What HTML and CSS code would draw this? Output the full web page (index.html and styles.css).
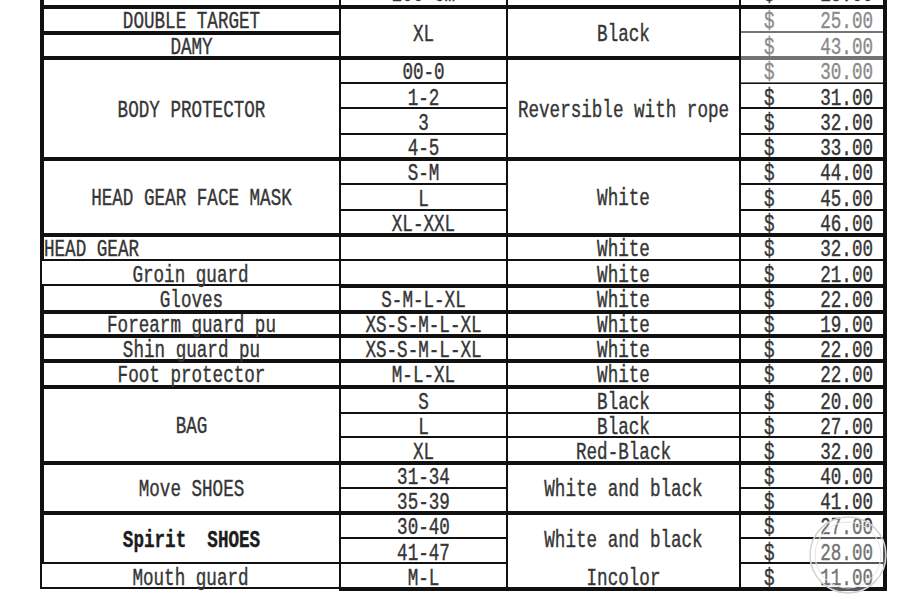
FILE: index.html
```html
<!DOCTYPE html>
<html>
<head>
<meta charset="utf-8">
<link rel="stylesheet" href="styles.css">
</head>
<body>
<div class="page">
  <div class="sheet">
    <!-- partial top row -->
    <div class="c n top"></div>
    <div class="c top"><span>200 cm</span></div>
    <div class="c top"></div>
    <div class="c p top"><span>$</span><span>18.00</span></div>

    <div class="c n tk"><span>DOUBLE TARGET</span></div>
    <div class="c tk r2"><span>XL</span></div>
    <div class="c tk r2"><span>Black</span></div>
    <div class="c p tk"><span>$</span><span>25.00</span></div>
    <div class="c n tk"><span>DAMY</span></div>
    <div class="c p"><span>$</span><span>43.00</span></div>

    <div class="c n tk r4"><span>BODY PROTECTOR</span></div>
    <div class="c tk"><span>00-0</span></div>
    <div class="c tk r4"><span>Reversible with rope</span></div>
    <div class="c p tk"><span>$</span><span>30.00</span></div>
    <div class="c"><span>1-2</span></div>
    <div class="c p"><span>$</span><span>31.00</span></div>
    <div class="c"><span>3</span></div>
    <div class="c p"><span>$</span><span>32.00</span></div>
    <div class="c"><span>4-5</span></div>
    <div class="c p"><span>$</span><span>33.00</span></div>

    <div class="c n tk r3"><span>HEAD GEAR FACE MASK</span></div>
    <div class="c tk"><span>S-M</span></div>
    <div class="c tk r3"><span>White</span></div>
    <div class="c p tk"><span>$</span><span>44.00</span></div>
    <div class="c"><span>L</span></div>
    <div class="c p"><span>$</span><span>45.00</span></div>
    <div class="c"><span>XL-XXL</span></div>
    <div class="c p"><span>$</span><span>46.00</span></div>

    <div class="c n tk left"><span>HEAD GEAR</span></div>
    <div class="c tk"></div>
    <div class="c tk"><span>White</span></div>
    <div class="c p tk"><span>$</span><span>32.00</span></div>

    <div class="c n thinl"><span>Groin guard</span></div>
    <div class="c"></div>
    <div class="c"><span>White</span></div>
    <div class="c p"><span>$</span><span>21.00</span></div>

    <div class="c n"><span>Gloves</span></div>
    <div class="c tk"><span>S-M-L-XL</span></div>
    <div class="c tk"><span>White</span></div>
    <div class="c p tk"><span>$</span><span>22.00</span></div>

    <div class="c n tk"><span>Forearm guard pu</span></div>
    <div class="c tk"><span>XS-S-M-L-XL</span></div>
    <div class="c tk"><span>White</span></div>
    <div class="c p tk"><span>$</span><span>19.00</span></div>

    <div class="c n tk"><span>Shin guard pu</span></div>
    <div class="c tk"><span>XS-S-M-L-XL</span></div>
    <div class="c tk"><span>White</span></div>
    <div class="c p tk"><span>$</span><span>22.00</span></div>

    <div class="c n tk"><span>Foot protector</span></div>
    <div class="c tk"><span>M-L-XL</span></div>
    <div class="c tk"><span>White</span></div>
    <div class="c p tk"><span>$</span><span>22.00</span></div>

    <div class="c n tk r3"><span>BAG</span></div>
    <div class="c tk"><span>S</span></div>
    <div class="c tk"><span>Black</span></div>
    <div class="c p tk"><span>$</span><span>20.00</span></div>
    <div class="c"><span>L</span></div>
    <div class="c"><span>Black</span></div>
    <div class="c p"><span>$</span><span>27.00</span></div>
    <div class="c"><span>XL</span></div>
    <div class="c"><span>Red-Black</span></div>
    <div class="c p"><span>$</span><span>32.00</span></div>

    <div class="c n tk r2"><span>Move SHOES</span></div>
    <div class="c tk"><span>31-34</span></div>
    <div class="c tk r2"><span>White and black</span></div>
    <div class="c p tk"><span>$</span><span>40.00</span></div>
    <div class="c"><span>35-39</span></div>
    <div class="c p"><span>$</span><span>41.00</span></div>

    <div class="c n tk r2 bold"><span>Spirit  SHOES</span></div>
    <div class="c tk"><span>30-40</span></div>
    <div class="c tk r2"><span>White and black</span></div>
    <div class="c p tk"><span>$</span><span>27.00</span></div>
    <div class="c"><span>41-47</span></div>
    <div class="c p"><span>$</span><span>28.00</span></div>

    <div class="c n thinl bb2"><span>Mouth guard</span></div>
    <div class="c bb"><span>M-L</span></div>
    <div class="c bb notop"><span>Incolor</span></div>
    <div class="c p bb"><span>$</span><span>11.00</span></div>
  </div>

  <div class="glare"></div>

  <svg class="mark" width="84" height="84" viewBox="0 0 84 84">
    <circle cx="42" cy="42" r="38" fill="rgba(255,255,255,0.3)" stroke="#d2d2d2" stroke-width="1.5"/>
    <circle cx="42" cy="42" r="33" fill="none" stroke="#e6e6e6" stroke-width="1"/>
  </svg>
</div>
</body>
</html>
```

FILE: styles.css
```css
html, body {
  margin: 0;
  padding: 0;
  background: #ffffff;
}

body {
  font-family: "Liberation Mono", "DejaVu Sans Mono", monospace;
  color: #363636;
}

.page {
  position: relative;
  width: 900px;
  height: 599px;
  overflow: hidden;
}

.sheet {
  margin-left: 40px;
  width: 843px;
  display: grid;
  grid-template-columns: 299px 167px 233px 144px;
  grid-template-rows: 5px 26px 25px 26px 25px 26px 24px 26px 26px 24px 26px 25px 26px 24px 25px 26px 27px 24px 25px 26px 24px 26px 25px 29px;
  border-right: 4px solid #111;
}

.c {
  box-sizing: border-box;
  border-left: 2px solid #111;
  border-top: 2px solid #111;
  padding-top: 8px;
  display: flex;
  align-items: center;
  justify-content: center;
  font-size: 17.6px;
  line-height: 1;
  min-width: 0;
  min-height: 0;
}

.c span {
  display: inline-block;
  white-space: pre;
  transform: scaleY(1.35);
  -webkit-text-stroke: 0.3px #363636;
}

.n {
  border-left-width: 4px;
}

.thinl {
  border-left-width: 2px;
}

.tk {
  border-top-width: 4px;
  padding-top: 6px;
}

.notop {
  border-top-width: 0;
  padding-top: 10px;
}

.r2 { grid-row: span 2; }
.r3 { grid-row: span 3; }
.r4 { grid-row: span 4; }

.left {
  justify-content: flex-start;
}

.bold {
  font-weight: bold;
  color: #1c1c1c;
}

.bold span {
  -webkit-text-stroke: 0.3px #1c1c1c;
}

.p {
  justify-content: space-between;
  padding-left: 23px;
  padding-right: 10px;
}

.top {
  border-top-width: 0;
  padding-top: 0;
  align-items: flex-end;
  overflow: hidden;
}

.bb {
  border-bottom: 4px solid #111;
}

.bb2 {
  border-bottom: 2px solid #111;
  margin-bottom: 2px;
}

.glare {
  position: absolute;
  left: 741px;
  top: 9px;
  width: 142px;
  height: 74px;
  background: rgba(255, 255, 255, 0.42);
}

.mark {
  position: absolute;
  left: 806px;
  top: 513px;
}
```
